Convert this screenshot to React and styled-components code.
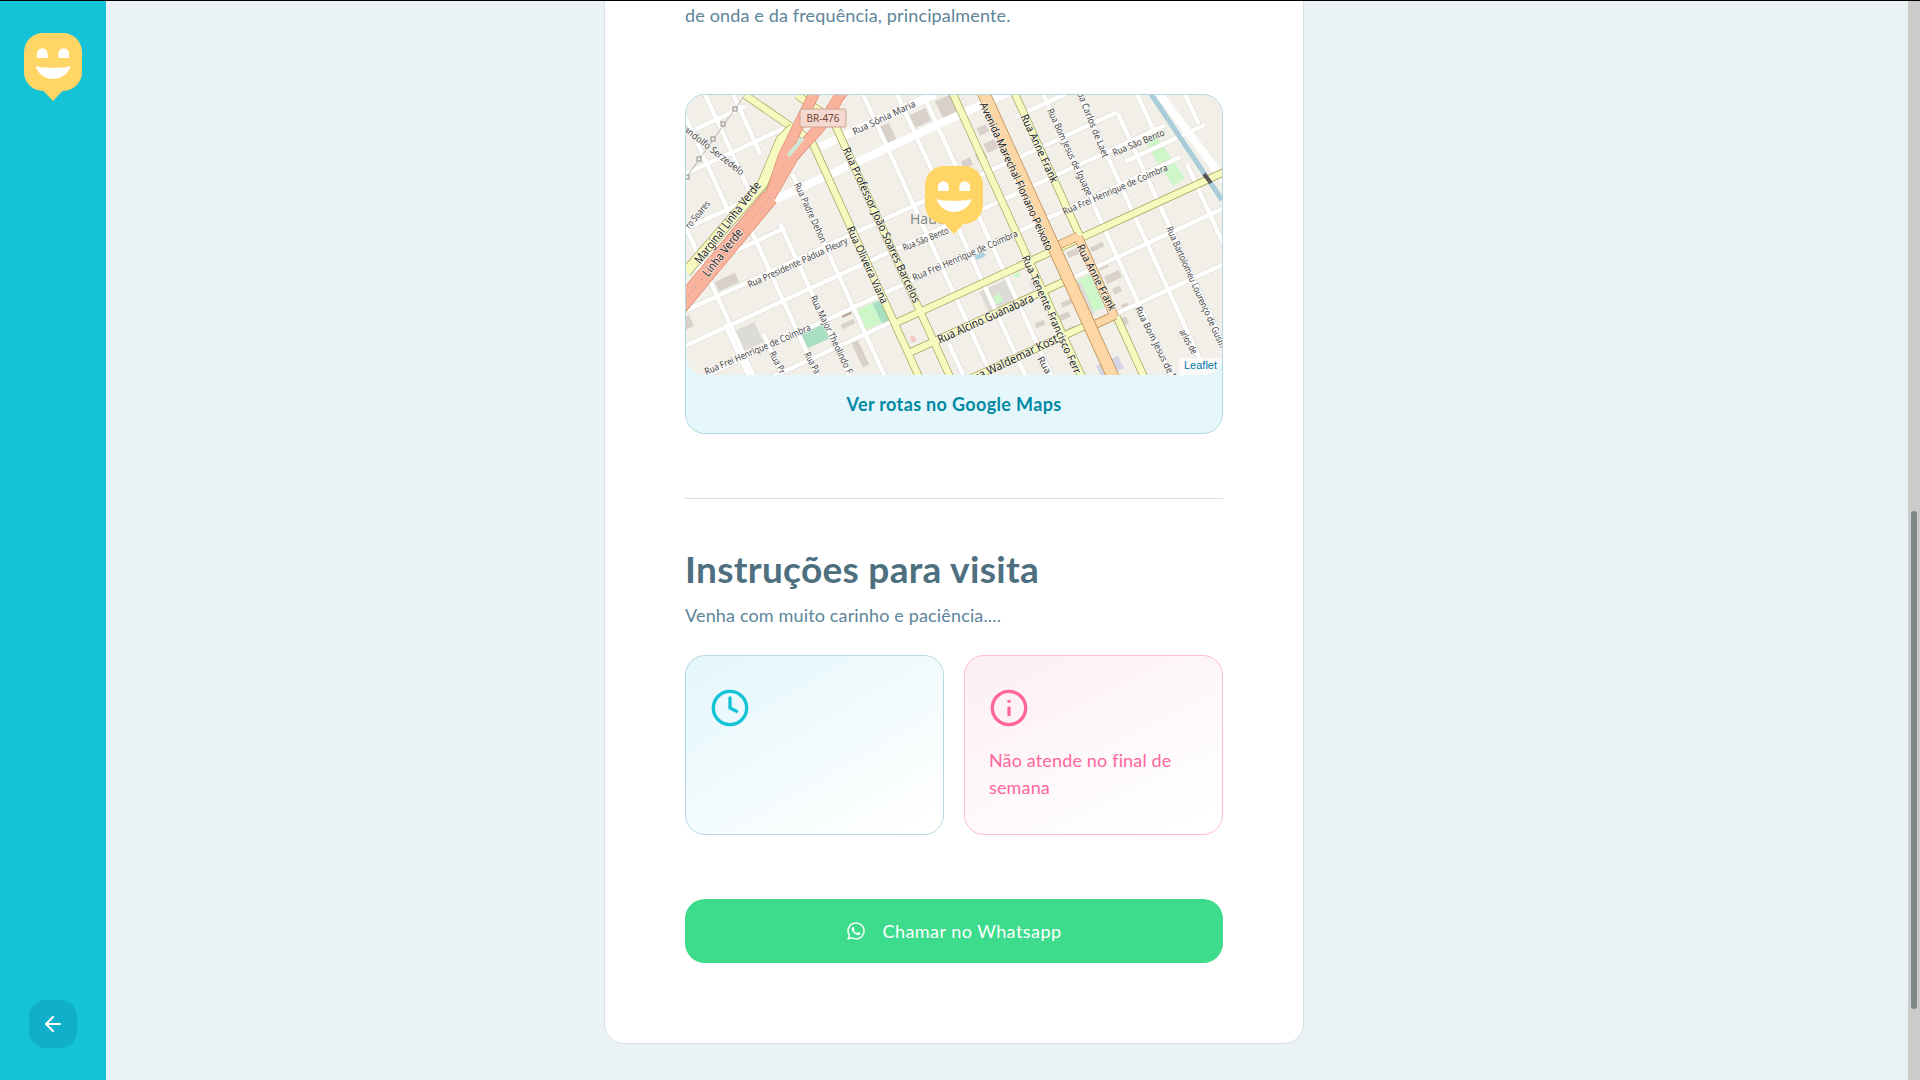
import React, { useLayoutEffect, useRef } from "react";
import styled, { createGlobalStyle } from "styled-components";
import { FiArrowLeft, FiClock, FiInfo } from "react-icons/fi";
import { FaWhatsapp } from "react-icons/fa";

const GlobalStyle = createGlobalStyle`
  * { box-sizing: border-box; margin: 0; padding: 0; }
  html, body, #root { height: 100%; }
  body {
    overflow: hidden;
    background: #ebf2f5;
    color: #5c8599;
    font: 400 18px/27px Lato, "Noto Sans", sans-serif;
    letter-spacing: 0.15px;
  }
`;

const Page = styled.div`
  height: 100vh;
  display: flex;
  flex-direction: column;
  border-top: 1px solid #000;
`;

const Shell = styled.div`
  flex: 1;
  min-height: 0;
  display: flex;
`;

const Sidebar = styled.aside`
  width: 106px;
  flex: none;
  background: #15c3d6;
  padding: 32px 0;
  display: flex;
  flex-direction: column;
  justify-content: space-between;
  align-items: center;
`;

const BackButton = styled.button`
  width: 48px;
  height: 48px;
  border: 0;
  border-radius: 16px;
  background: #12afcb;
  color: #fff;
  display: flex;
  align-items: center;
  justify-content: center;
`;

const Main = styled.main`
  flex: 1;
  min-width: 0;
  overflow: hidden;
  padding: 64px 106px 190px 0;
`;

const ScrollTrack = styled.div`
  width: 12px;
  flex: none;
  background: #cbcbcb;
  border-left: 1px solid #d0c9c5;
  padding: 510px 0 0 2px;
`;

const ScrollThumb = styled.div`
  width: 6px;
  height: 498px;
  border-radius: 3px;
  background: #7f8888;
`;

const Card = styled.div`
  width: 700px;
  margin: 0 auto;
  background: #fff;
  border: 1px solid #d3e2e5;
  border-radius: 20px;
  padding: 0 80px 80px;
`;

/* everything above the fold of the reference is scrolled away */
const ScrolledAway = styled.div`
  height: 1041px;
`;

const Lead = styled.p``;

const MapFrame = styled.div`
  margin-top: 65px;
  background: #e6f7fb;
  border: 1px solid #b3dae2;
  border-radius: 20px;
`;

const MapView = styled.div`
  position: relative;
  height: 280px;
  border-radius: 20px;
  overflow: hidden;
  background: #f2efe9;

  svg.tiles { display: block; }
`;

const Marker = styled.svg`
  position: absolute;
  left: 239px;
  top: 71px;
`;

const Attribution = styled.div`
  position: absolute;
  right: 0;
  bottom: 0;
  padding: 0 5px 2px;
  background: rgba(255, 255, 255, 0.7);
  color: #0078a8;
  font: 11px/15px "Liberation Sans", sans-serif;
  letter-spacing: 0;
`;

const MapFooter = styled.a`
  height: 58px;
  display: flex;
  align-items: center;
  justify-content: center;
  color: #0089a5;
  font-weight: 700;
  letter-spacing: 0.35px;
`;

const Divider = styled.hr`
  height: 1px;
  border: 0;
  background: #d3e2e5;
  margin: 64px 0 47px;
`;

const Title = styled.h2`
  font-size: 37px;
  line-height: 46px;
  font-weight: 700;
  letter-spacing: 0.3px;
  color: #4d6f80;
`;

const Subtitle = styled.p`
  margin-top: 10px;
`;

const OpenDetails = styled.div`
  margin-top: 26px;
  display: grid;
  grid-template-columns: 1fr 1fr;
  gap: 20px;
`;

const DetailBox = styled.div`
  padding: 32px 24px 33px;
  border-radius: 20px;
  border: 1px solid ${(p) => (p.$tone === "pink" ? "#ffbcd4" : "#b3dae2")};
  background: ${(p) =>
    p.$tone === "pink"
      ? "linear-gradient(154.16deg, #fcf0f4 7.85%, #fff 91.03%)"
      : "linear-gradient(149.97deg, #e6f7fb 8.13%, #fff 92.67%)"};
  color: ${(p) => (p.$tone === "pink" ? "#ff669d" : "#5c8599")};

  svg { display: block; margin-bottom: 19px; }
`;

const ContactButton = styled.button`
  margin-top: 64px;
  width: 100%;
  height: 64px;
  border: 0;
  border-radius: 20px;
  background: #3cdc8c;
  color: #fff;
  font: inherit;
  letter-spacing: 0.45px;
  display: flex;
  align-items: center;
  justify-content: center;
  gap: 16px;
`;

function Logo({ as: Comp = "svg", ...props }) {
  return (
    <Comp width="58" height="68" viewBox="0 0 58 68" {...props}>
      <path
        d="M19 0h20a19 19 0 0 1 19 19v20a19 19 0 0 1-19 19h-0.5L29 68l-9.5-10H19A19 19 0 0 1 0 39V19A19 19 0 0 1 19 0z"
        fill="#ffd666"
      />
      <path d="M13 25v-4.500a5.300 5.300 0 0 1 10.600 0V25zM34.400 25v-4.500a5.300 5.300 0 0 1 10.600 0V25z" fill="#fff" />
      <path d="M11.500 33C18 35.500 40 35.500 47 33C44 41 37 46 29 46C21 46 14 41 11.500 33z" fill="#fff" />
    </Comp>
  );
}

// the street grid of the map is skewed: A runs down-right, B runs up-right
const alongA = (d, y0 = -10, y1 = 290) => `M${d + 0.456 * y0} ${y0}L${d + 0.456 * y1} ${y1}`;
const alongB = (c, x0 = -10, x1 = 548) => `M${x0} ${c - 0.46 * x0}L${x1} ${c - 0.46 * x1}`;

const whiteA = [
  [-60], [-31, 240], [4, 130], [36, 130], [71, 80], [178], [212], [238], [358], [394], [424, 20], [470, 70], [505, 130],
  [-10, -10, 120], [20, -10, 95], [48, -10, 60], [452, -10, 40], [500, -10, 30], [-65, 230], [150, 250, 290],
].map(([d, y0, y1]) => alongA(d, y0, y1));

const whiteB = [
  [80, -10, 160], [180, -10, 100], [217, -10, 432], [252, -10, 480], [291, -10, 495], [135, -10, 60],
  [323, -10, 212], [362, 380, 548], [418, 430, 548], [455, -10, 280], [490, -10, 300], [40, -10, 60], [530, 200, 300],
  [270, 440, 520], [560, 480, 548], [175, 330, 420], [590, 500, 548],
].map(([c, x0, x1]) => alongB(c, x0, x1));

const wideWhite = [alongB(147, 88, 335), alongB(115, 135, 250), "M470 -6L548 98"];

const yellowRoads = [
  alongA(268),
  alongA(136, 29, 290),
  alongA(105, 48, 290),
  alongA(330, -10, 143),
  alongA(330, 223, 290),
  alongB(326, 210, 548),
  alongB(362, 225, 385),
  alongB(416, 270, 402),
  "M60 1L108 34L128 48",
  "M112 1L152 29",
];

const orangeRoads = [
  alongA(328, 143, 223),
  alongB(323, 368, 393),
  alongB(419, 402, 430),
];

const motorwayBranches = ["M85 103L98 63L132 -6", "M85 103L108 63L135 33L160 -6"];
const motorwayTrunk = "M-6 213L85 103";
const pylons = [[50, 15], [38, 30], [28, 45], [14, 65], [2, 83]];

const buildings = [
  [42, 188, 22, 10, "#d9d0c9"], [203, 39, 10, 18, "#d9d0c9"], [235, 24, 18, 14, "#d9d0c9"], [262, 14, 16, 22, "#d9d0c9"],
  [63, 243, 24, 22, "#dddbd6"], [130, 241, 24, 18, "#a8dfc3"], [185, 222, 26, 22, "#cdf7c9"], [196, 218, 8, 22, "#a8dfc3"],
  [161, 219, 10, 6, "#b8a698"], [163, 230, 14, 5, "#d9d0c9"], [175, 259, 7, 28, "#d9d0c9"], [1, 229, 12, 12, "#d9d0c9"],
  [312, 203, 28, 24, "#dddbd6"], [313, 205, 8, 8, "#cdf7c9"], [282, 69, 10, 8, "#d9d0c9"], [296, 62, 10, 8, "#d9d0c9"],
  [306, 52, 12, 10, "#d9d0c9"], [298, 36, 10, 8, "#d9d0c9"], [362, 149, 10, 5, "#d9d0c9"], [388, 159, 12, 6, "#d9d0c9"],
  [412, 153, 14, 5, "#d9d0c9"], [428, 183, 16, 8, "#d9d0c9"], [432, 196, 8, 6, "#d9d0c9"], [382, 209, 12, 5, "#d9d0c9"],
  [378, 223, 14, 6, "#d9d0c9"], [438, 228, 10, 8, "#d9d0c9"], [350, 190, 10, 10, "#e6e3df"], [332, 181, 7, 4, "#cdf7c9"],
  [295, 162, 10, 5, "#aad3df"], [425, 273, 24, 14, "#d5d5e5"], [228, 245, 5, 6, "#f3c7c0"], [418, 172, 10, 6, "#d9d0c9"],
  [386, 236, 10, 5, "#d9d0c9"], [372, 166, 8, 6, "#d9d0c9"], [440, 212, 7, 5, "#d9d0c9"], [355, 230, 10, 5, "#d9d0c9"],
];

const rotated = [
  [407, 199, 20, 36, 24, "#cdf7c9"],
  [397, 206, 12, 36, 24, "#dedcd8"],
];

const ROAD_TEXT = "#222";
const STREET_TEXT = "#444";

// x1 y1 x2 y2 text size colour
const labels = [
  [161, 54, 232, 208, "Rua Professor João Soares Barcelos", 11, ROAD_TEXT],
  [165, 133, 200, 209, "Rua Oliveira Viana", 11, ROAD_TEXT],
  [298, 9, 365, 156, "Avenida Marechal Floriano Peixoto", 11, ROAD_TEXT],
  [339, 21, 370, 88, "Rua Anne Frank", 11, ROAD_TEXT],
  [395, 151, 428, 216, "Rua Anne Frank", 11, ROAD_TEXT],
  [340, 162, 393, 279, "Rua Tenente Francisco Ferr", 11, ROAD_TEXT],
  [112, 89, 139, 148, "Rua Padre Dehon", 9.500, STREET_TEXT],
  [128, 202, 165, 279, "Rua Major Theolindo F", 9.500, STREET_TEXT],
  [365, 15, 405, 101, "Rua Bom Jesus de Iguape", 9.500, STREET_TEXT],
  [393, -7, 421, 63, "Rua Carlos de Laet", 9.500, STREET_TEXT],
  [484, 133, 538, 253, "Rua Bartolomeu Lourenço de Gusm", 9.500, STREET_TEXT],
  [453, 213, 488, 283, "Rua Bom Jesus de I", 9.500, STREET_TEXT],
  [497, 236, 510, 259, "arlos de", 9.500, STREET_TEXT],
  [87, 258, 98, 279, "Rua Pr", 9.500, STREET_TEXT],
  [122, 259, 133, 279, "Rua Pa", 9.500, STREET_TEXT],
  [355, 263, 364, 279, "Rua", 9.500, STREET_TEXT],
  [0, 34, 58, 79, "andolfo Serzedelo", 9.500, STREET_TEXT],
  [2, 133, 23, 108, "ro Soares", 9.500, STREET_TEXT],
  [168, 38, 230, 9, "Rua Sônia Maria", 9.500, STREET_TEXT],
  [63, 191, 162, 146, "Rua Presidente Pádua Fleury", 9.500, STREET_TEXT],
  [218, 154, 263, 136, "Rua São Bento", 9.500, STREET_TEXT],
  [428, 59, 479, 38, "Rua São Bento", 9.500, STREET_TEXT],
  [228, 184, 332, 139, "Rua Frei Henrique de Coimbra", 9.500, STREET_TEXT],
  [378, 118, 482, 73, "Rua Frei Henrique de Coimbra", 9.500, STREET_TEXT],
  [20, 278, 125, 233, "Rua Frei Henrique de Coimbra", 9.500, STREET_TEXT],
  [253, 246, 348, 203, "Rua Alcino Guanabara", 12, ROAD_TEXT],
  [282, 287, 372, 244, "Rua Waldemar Kost", 12, ROAD_TEXT],
  [12, 168, 73, 89, "Marginal Linha Verde", 12, ROAD_TEXT],
  [20, 181, 55, 136, "Linha Verde", 12, ROAD_TEXT],
];

function MapLabel({ x1, y1, x2, y2, text, size, color }) {
  const angle = (Math.atan2(y2 - y1, x2 - x1) * 180) / Math.PI;
  const length = Math.hypot(x2 - x1, y2 - y1);
  return (
    <text
      transform={`translate(${x1} ${y1}) rotate(${angle})`}
      dy="0.35em"
      textLength={length}
      lengthAdjust="spacingAndGlyphs"
      fontFamily="'Noto Sans', sans-serif"
      fontSize={size}
      letterSpacing="0"
      fill={color}
      stroke="rgba(255,255,255,0.7)"
      strokeWidth="1.500"
      paintOrder="stroke"
    >
      {text}
    </text>
  );
}

function StreetMap() {
  return (
    <svg className="tiles" width="536" height="280" viewBox="1 1 536 280">
      <rect x="0" y="0" width="540" height="285" fill="#f2efe9" />
      <path d="M470 40L500 84L488 92L462 52z" fill="#cdf7c9" />
      {buildings.map(([x, y, w, h, fill], i) => (
        <rect key={i} x={x - w / 2} y={y - h / 2} width={w} height={h} fill={fill} transform={`rotate(-24.7 ${x} ${y})`} />
      ))}
      {rotated.map(([x, y, w, h, deg, fill], i) => (
        <rect key={i} x={x - w / 2} y={y - h / 2} width={w} height={h} fill={fill} transform={`rotate(${-deg} ${x} ${y})`} />
      ))}
      <g fill="none" strokeLinecap="butt">
        {whiteA.concat(whiteB).map((d, i) => (
          <path key={i} d={d} stroke="#d8d4cc" strokeWidth="5.500" />
        ))}
        {whiteA.concat(whiteB).map((d, i) => (
          <path key={i} d={d} stroke="#fff" strokeWidth="4.500" />
        ))}
        <path d="M60 1L-2 88" stroke="#a9a39a" strokeWidth="0.800" />
        {pylons.map(([x, y], i) => (
          <rect key={i} x={x - 2} y={y - 2} width="4" height="4" fill="#f2efe9" stroke="#8f8f8f" strokeWidth="1" />
        ))}
        <path d="M462 -6L537 106" stroke="#a9cdd8" strokeWidth="5" />
        {wideWhite.map((d, i) => (
          <path key={i} d={d} stroke="#fff" strokeWidth="8" />
        ))}
        {yellowRoads.map((d, i) => (
          <path key={i} d={d} stroke="#a8a860" strokeWidth="8" />
        ))}
        {yellowRoads.map((d, i) => (
          <path key={i} d={d} stroke="#f7fabf" strokeWidth="6.500" />
        ))}
        <path d="M519 80L526 89" stroke="#555" strokeWidth="4" />
        <path d="M1 178L78 89L96 46L108 34" stroke="#a8a860" strokeWidth="11" />
        <path d="M1 178L78 89L96 46L108 34" stroke="#f7fabf" strokeWidth="9.500" />
        <path d="M-6 222L108 63" stroke="#a8a860" strokeWidth="7" />
        <path d="M-6 222L108 63" stroke="#f7fabf" strokeWidth="5.500" />
        {orangeRoads.map((d, i) => (
          <path key={i} d={d} stroke="#b98a4e" strokeWidth="9" />
        ))}
        {orangeRoads.map((d, i) => (
          <path key={i} d={d} stroke="#fcd6a4" strokeWidth="7.500" />
        ))}
        <path d={alongA(299)} stroke="#b98a4e" strokeWidth="13" />
        <path d={alongA(299)} stroke="#fcd6a4" strokeWidth="11.500" />
        {motorwayBranches.map((d, i) => (
          <path key={i} d={d} stroke="#d9775c" strokeWidth="11" />
        ))}
        <path d={motorwayTrunk} stroke="#d9775c" strokeWidth="17" />
        {motorwayBranches.map((d, i) => (
          <path key={i} d={d} stroke="#f9b29c" strokeWidth="10" />
        ))}
        <path d={motorwayTrunk} stroke="#f9b29c" strokeWidth="16" />
        <path d={motorwayTrunk} stroke="#a9a39a" strokeWidth="0.800" strokeDasharray="2 3" />
        <path d="M103 62L118 44" stroke="#cfe8d4" strokeWidth="4" />
      </g>
      {labels.map(([x1, y1, x2, y2, text, size, color], i) => (
        <MapLabel key={i} x1={x1} y1={y1} x2={x2} y2={y2} text={text} size={size} color={color} />
      ))}
      <text x="225" y="130" fontFamily="'Noto Sans', sans-serif" fontSize="14" letterSpacing="0" fill="#888">Hauer</text>
      <rect x="115" y="15" width="46" height="18" rx="2" fill="#f3d9cf" stroke="#cfa08f" />
      <text x="138" y="27.500" textAnchor="middle" fontFamily="'Noto Sans', sans-serif" fontSize="10" letterSpacing="0" fill="#7a4436">BR-476</text>
    </svg>
  );
}

export default function App() {
  const mainRef = useRef(null);

  // the reference was taken with the page scrolled down to the map
  useLayoutEffect(() => {
    mainRef.current.scrollTop = 1105;
  }, []);

  return (
    <Page>
      <GlobalStyle />
      <Shell>
        <Sidebar>
          <Logo />
          <BackButton type="button">
            <FiArrowLeft size={24} />
          </BackButton>
        </Sidebar>
        <Main ref={mainRef}>
          <Card>
            <ScrolledAway />
            <Lead>de onda e da frequência, principalmente.</Lead>

            <MapFrame>
              <MapView>
                <StreetMap />
                <Logo as={Marker} />
                <Attribution>Leaflet</Attribution>
              </MapView>
              <MapFooter>Ver rotas no Google Maps</MapFooter>
            </MapFrame>

            <Divider />

            <Title>Instruções para visita</Title>
            <Subtitle>Venha com muito carinho e paciência....</Subtitle>

            <OpenDetails>
              <DetailBox>
                <FiClock size={40} color="#15c3d6" />
              </DetailBox>
              <DetailBox $tone="pink">
                <FiInfo size={40} color="#ff669d" />
                Não atende no final de semana
              </DetailBox>
            </OpenDetails>

            <ContactButton type="button">
              <FaWhatsapp size={20} />
              Chamar no Whatsapp
            </ContactButton>
          </Card>
        </Main>
        <ScrollTrack>
          <ScrollThumb />
        </ScrollTrack>
      </Shell>
    </Page>
  );
}
